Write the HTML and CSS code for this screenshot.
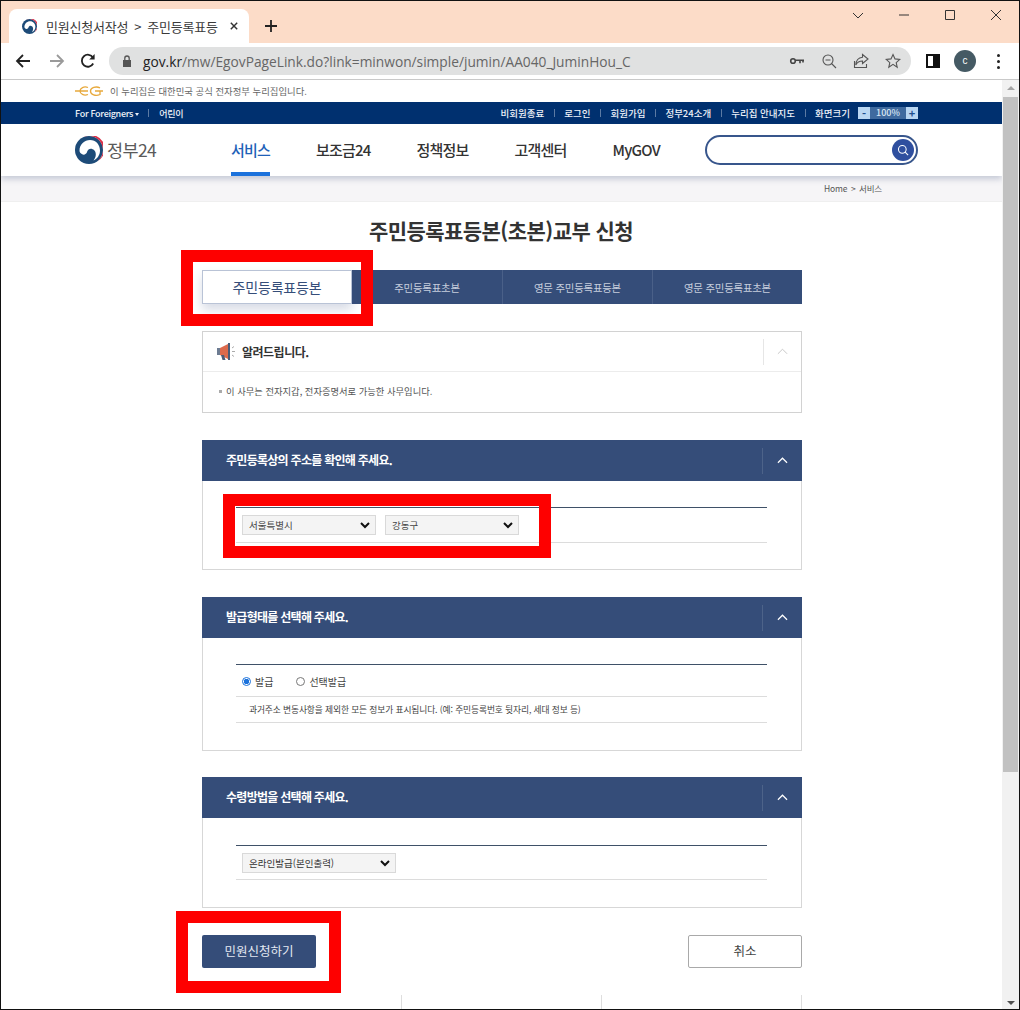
FILE: index.html
```html
<!DOCTYPE html>
<html lang="ko">
<head>
<meta charset="utf-8">
<title>민원신청서작성</title>
<link rel="stylesheet" href="styles.css">
</head>
<body>
<div class="window">
  <div class="tabstrip">
    <div class="tab">
      <svg class="favicon" viewBox="0 0 28 28"><use href="#taegeuk"/></svg>
      <span class="tab-title">민원신청서작성 &gt; 주민등록표등</span>
      <svg class="tab-close" viewBox="0 0 10 10"><path d="M1 1l8 8M9 1l-8 8"/></svg>
    </div>
    <svg class="newtab" viewBox="0 0 12 12"><path d="M6 0v12M0 6h12"/></svg>
    <div class="winctl">
      <svg viewBox="0 0 12 12"><path d="M1 4l5 5 5-5"/></svg>
      <svg viewBox="0 0 12 12"><path d="M1 6h10"/></svg>
      <svg viewBox="0 0 12 12"><path d="M1.500 1.500h9v9h-9z"/></svg>
      <svg viewBox="0 0 12 12"><path d="M1 1l10 10M11 1L1 11"/></svg>
    </div>
  </div>
  <div class="toolbar">
    <svg class="tb-icon" viewBox="0 0 16 16"><path class="ln" d="M15 8H2M8 2L2 8l6 6"/></svg>
    <svg class="tb-icon dim" viewBox="0 0 16 16"><path class="ln" d="M1 8h13M8 2l6 6-6 6"/></svg>
    <svg class="tb-icon reload" viewBox="0 0 16 16"><path class="ln" d="M13.200 10.500A6 6 0 1 1 13 4.600"/><path class="fl" d="M14.600 1v5.400H9.200z"/></svg>
    <div class="omnibox">
      <svg class="lock" viewBox="0 0 10 12"><path d="M1 5h8v7H1z"/><path class="shackle" d="M2.800 5V3.200a2.200 2.200 0 0 1 4.400 0V5"/></svg>
      <span class="url"><b>gov.kr</b>/mw/EgovPageLink.do?link=minwon/simple/jumin/AA040_JuminHou_C</span>
      <div class="omni-icons">
        <svg viewBox="0 0 16 16"><circle class="ln" cx="4" cy="8" r="2.300"/><path class="ln" d="M6.500 7.200H15M11 7.200v3M14 7.200v2.400"/></svg>
        <svg viewBox="0 0 16 16"><circle class="ln1" cx="7" cy="7" r="5"/><path class="ln1" d="M4.500 7h5M10.500 10.500L15 15"/></svg>
        <svg viewBox="0 0 16 16"><path class="ln1" d="M1.500 8v6.500h12V11M9.500 1.500L15 6l-5.500 4.500V8C6 8 4 9.500 2.800 12 3 7.500 5.500 4.600 9.500 4.200z"/></svg>
        <svg viewBox="0 0 16 16"><path class="ln1" d="M8 1.500l2 4.400 4.800.5-3.600 3.200 1 4.700L8 11.400l-4.200 2.900 1-4.700-3.600-3.200 4.800-.5z"/></svg>
      </div>
    </div>
    <div class="tb-right">
      <span class="sidepanel"></span>
      <span class="avatar">c</span>
      <span class="dots"><i></i><i></i><i></i></span>
    </div>
  </div>
  <div class="viewport">
    <div class="page">
      <div class="gov-strip">
        <svg class="eg" viewBox="0 0 28 10"><path d="M0 5H13M13 1.500C9 0 5 2 5 5s4 5 8 3.500M25 1.800C21 0 15.500 1.500 15.500 5s5 5.500 9.500 3.500V5H20M25 5h3"/></svg>
        <span>이 누리집은 대한민국 공식 전자정부 누리집입니다.</span>
      </div>
      <div class="utilbar">
        <div class="util-left">
          <span>For Foreigners <em class="caret"></em></span>
          <i class="sep"></i>
          <span>어린이</span>
        </div>
        <div class="util-right">
          <span>비회원종료</span><i class="sep"></i>
          <span>로그인</span><i class="sep"></i>
          <span>회원가입</span><i class="sep"></i>
          <span>정부24소개</span><i class="sep"></i>
          <span>누리집 안내지도</span><i class="sep"></i>
          <span>화면크기</span>
          <div class="zoomer"><b>-</b><span>100%</span><b>+</b></div>
        </div>
      </div>
      <header class="mainhead">
        <div class="brand">
          <svg class="logo" viewBox="0 0 28 28"><use href="#taegeuk"/></svg>
          <span>정부24</span>
        </div>
        <nav class="gnb">
          <a class="on">서비스</a>
          <a>보조금24</a>
          <a>정책정보</a>
          <a>고객센터</a>
          <a>MyGOV</a>
        </nav>
        <div class="search">
          <span class="search-btn"><svg viewBox="0 0 14 14"><circle cx="6.200" cy="6.200" r="4.500"/><path d="M9.500 9.500L13 13"/></svg></span>
        </div>
      </header>
      <div class="crumb">
        <span>Home &gt; 서비스</span>
      </div>
      <main class="content">
        <h1>주민등록표등본(초본)교부 신청</h1>
        <div class="tabs">
          <a class="active">주민등록표등본</a>
          <a>주민등록표초본</a>
          <a>영문 주민등록표등본</a>
          <a>영문 주민등록표초본</a>
        </div>
        <section class="notice">
          <div class="notice-head">
            <svg class="mega" viewBox="0 0 20 20"><path fill="#6d7c92" d="M1 6h3v7H1z"/><path fill="#dc6a4c" d="M4 6l8-4v15l-8-4z"/><path fill="#4a5d78" d="M12 1h2v17h-2zM5 13h3l1.500 5H6.500z"/><path fill="none" stroke="#aaa" d="M16 6l2-1.500M16 9.500h3M16 13l2 1.500"/></svg>
            <strong>알려드립니다.</strong>
            <span class="chev-cell"><svg class="chev" viewBox="0 0 12 7"><path d="M1 6l5-5 5 5"/></svg></span>
          </div>
          <p class="notice-body"><i class="sq"></i>이 사무는 전자지갑, 전자증명서로 가능한 사무입니다.</p>
        </section>

        <section class="panel p-addr">
          <div class="panel-head">
            <h2>주민등록상의 주소를 확인해 주세요.</h2>
            <span class="chev-cell"><svg class="chev" viewBox="0 0 12 7"><path d="M1 6l5-5 5 5"/></svg></span>
          </div>
          <div class="panel-body">
            <div class="row row-sel">
              <select class="sel"><option>서울특별시</option></select>
              <select class="sel"><option>강동구</option></select>
            </div>
          </div>
        </section>

        <section class="panel p-type">
          <div class="panel-head">
            <h2>발급형태를 선택해 주세요.</h2>
            <span class="chev-cell"><svg class="chev" viewBox="0 0 12 7"><path d="M1 6l5-5 5 5"/></svg></span>
          </div>
          <div class="panel-body">
            <div class="row row-radio">
              <label class="radio"><i class="dot on"></i>발급</label>
              <label class="radio"><i class="dot"></i>선택발급</label>
            </div>
            <div class="row row-note">과거주소 변동사항을 제외한 모든 정보가 표시됩니다. (예: 주민등록번호 뒷자리, 세대 정보 등)</div>
          </div>
        </section>

        <section class="panel p-recv">
          <div class="panel-head">
            <h2>수령방법을 선택해 주세요.</h2>
            <span class="chev-cell"><svg class="chev" viewBox="0 0 12 7"><path d="M1 6l5-5 5 5"/></svg></span>
          </div>
          <div class="panel-body">
            <div class="row row-sel2">
              <select class="sel wide"><option>온라인발급(본인출력)</option></select>
            </div>
          </div>
        </section>

        <div class="actions">
          <a class="btn primary">민원신청하기</a>
          <a class="btn ghost">취소</a>
        </div>
        <div class="foot-lines"><i></i><i></i><i></i></div>
      </main>
      <div class="mark m1"></div>
      <div class="mark m2"></div>
      <div class="mark m3"></div>
    </div>
    <div class="scrollbar">
      <i class="arrow up"></i>
      <div class="track"><div class="thumb"></div></div>
      <i class="arrow down"></i>
    </div>
  </div>
</div>
<svg class="defs" width="0" height="0">
  <symbol id="taegeuk" viewBox="0 0 28 28">
    <circle cx="14" cy="14" r="14" fill="#1d4b78"/>
    <path fill="#fff" d="M4.500 14.500C4.500 8.500 9.500 4 15 4c6 0 10 4.800 10 10.500 0 4.500-2.500 8-6.500 10 2.500-3 3.300-7.500.7-10.300-2.600-2.700-6.200-1.700-7 1.300-.7 2.800-3.200 3.800-5 2.800-1.700-1-2.700-2-2.700-3.800z"/>
    <path fill="#d9324a" d="M9 .9A14 14 0 0 1 23 24.700 11.500 11.500 0 0 0 9 .9z"/>
  </symbol>
</svg>
</body>
</html>
```
FILE: styles.css
```css
* { box-sizing: border-box; }
html, body { margin: 0; padding: 0; height: 100%; overflow: hidden; background: #fff; }
body { font-family: "Noto Sans CJK KR", "Liberation Sans", sans-serif; color: #333; }
a { text-decoration: none; color: inherit; }
h1, h2, p { margin: 0; }
i, em { font-style: normal; }
.defs { position: absolute; }

.window { width: 1020px; height: 1010px; border: 1px solid #111; display: flex; flex-direction: column; overflow: hidden; }

/* title strip */
.tabstrip { height: 42px; flex: none; background: #fcdcc8; display: flex; align-items: flex-end; padding-left: 8px; }
.tab { width: 240px; height: 34px; background: #fff; border-radius: 8px 8px 0 0; display: flex; align-items: center; padding: 0 11px 0 13px; }
.favicon { width: 15px; height: 15px; flex: none; }
.tab-title { margin-left: 9px; white-space: nowrap; font-size: 13px; color: #3a3a3a; letter-spacing: -.2px; word-spacing: 2.500px; }
.tab-close { width: 8px; height: 8px; margin-left: auto; flex: none; fill: none; stroke: #333; stroke-width: 1.800; }
.newtab { width: 12px; height: 12px; margin: 0 0 11px 16px; fill: none; stroke: #222; stroke-width: 1.800; flex: none; }
.winctl { margin-left: auto; align-self: flex-start; display: flex; gap: 34px; padding: 8px 17px 0 0; }
.winctl svg { width: 12px; height: 12px; fill: none; stroke: #333; stroke-width: 1; }

/* toolbar */
.toolbar { height: 37px; flex: none; background: #fff; border-bottom: 1px solid #c9c9c9; display: flex; align-items: center; padding-left: 14px; }
.tb-icon { width: 16px; height: 16px; flex: none; margin-right: 18px; }
.tb-icon.reload { margin-right: 13px; margin-left: -3px; }
.tb-icon .ln { fill: none; stroke: #222; stroke-width: 1.800; }
.tb-icon .fl { fill: #222; }
.tb-icon.dim .ln { stroke: #9a9a9a; }
.omnibox { width: 802px; height: 28px; background: #e0e1e1; border-radius: 14px; display: flex; align-items: center; padding-left: 13px; flex: none; }
.lock { width: 10px; height: 12px; flex: none; fill: #555; }
.lock .shackle { fill: none; stroke: #555; stroke-width: 1.300; }
.url { margin-left: 11px; font: 13.740px "Open Sans", "Liberation Sans", sans-serif; color: #666; white-space: nowrap; }
.url b { font-weight: 400; color: #222; }
.omni-icons { margin-left: auto; display: flex; gap: 16px; padding-right: 10px; }
.omni-icons svg { width: 16px; height: 16px; }
.omni-icons .ln { fill: none; stroke: #444; stroke-width: 1.600; }
.omni-icons .ln1 { fill: none; stroke: #555; stroke-width: 1.100; }
.tb-right { display: flex; align-items: center; margin-left: 15px; }
.sidepanel { width: 14px; height: 14px; border: 2px solid #111; border-right-width: 7px; }
.avatar { width: 22px; height: 22px; border-radius: 50%; background: #455a64; color: #fff; font: 10px/22px "Liberation Sans", sans-serif; text-align: center; margin-left: 14px; }
.dots { display: flex; flex-direction: column; gap: 3px; margin-left: 21px; }
.dots i { width: 3px; height: 3px; border-radius: 50%; background: #222; }

/* viewport */
.viewport { flex: 1; display: flex; min-height: 0; }
.page { width: 1001px; flex: none; position: relative; overflow: hidden; background: #fff; }
.scrollbar { width: 17px; flex: none; background: #f1f1f1; display: flex; flex-direction: column; align-items: center; padding-top: 6px; padding-bottom: 4px; }
.arrow { width: 0; height: 0; border-left: 4px solid transparent; border-right: 4px solid transparent; flex: none; }
.arrow.up { border-bottom: 4px solid #a3a3a3; }
.arrow.down { border-top: 4px solid #505050; }
.track { flex: 1; width: 100%; padding: 7px 1px 0; }
.thumb { height: 675px; background: #c1c1c1; }

/* government strip */
.gov-strip { height: 22px; display: flex; align-items: center; padding-left: 74px; font-size: 9.400px; color: #666; }
.eg { width: 28px; height: 10px; fill: none; stroke: #e8a93c; stroke-width: 1.300; margin-right: 7px; flex: none; }

.utilbar { height: 22px; background: #00306f; color: #eef2f8; font-size: 9.500px; font-weight: 500; display: flex; justify-content: space-between; align-items: center; padding: 0 84px 0 74px; white-space: nowrap; }
.util-left, .util-right { display: flex; align-items: center; }
.util-left { font-size: 9px; letter-spacing: -.3px; }
.sep { width: 1px; height: 8px; background: #5c7aa3; margin: 0 9.500px; flex: none; }
.util-left .sep { margin: 0 10px 0 9px; }
.caret { display: inline-block; border-left: 2.500px solid transparent; border-right: 2.500px solid transparent; border-top: 3px solid #e8eef6; vertical-align: 1px; }
.zoomer { display: flex; height: 12px; margin-left: 8px; line-height: 12px; text-align: center; font-size: 9px; }
.zoomer b { width: 12px; background: #b9d6f2; color: #1f4f8f; font-size: 11px; }
.zoomer span { width: 36px; background: #3f6a9f; color: #d8e6f4; }

/* main header */
.mainhead { height: 52px; padding: 0 84px 0 74px; background: #fff; display: flex; align-items: center; box-shadow: 0 3px 6px rgba(70, 85, 130, .28); position: relative; }
.brand { display: flex; align-items: center; width: 156px; flex: none; color: #5a5a5a; font-size: 17.500px; letter-spacing: -.6px; line-height: 50px; }
.logo { width: 28px; height: 28px; margin-right: 4px; flex: none; }
.gnb { display: flex; gap: 46px; height: 100%; font-size: 15px; font-weight: 500; color: #333; letter-spacing: -.8px; flex: none; }
.gnb a { line-height: 52px; height: 100%; white-space: nowrap; }
.gnb a.on { color: #1f62b8; border-bottom: 4px solid #1b72dc; }
.search { margin-left: auto; width: 213px; height: 30px; border: 2px solid #38568c; border-radius: 15px; display: flex; justify-content: flex-end; align-items: center; padding-right: 2px; }
.search-btn { width: 22px; height: 22px; border-radius: 50%; background: #2f4f9f; display: flex; align-items: center; justify-content: center; }
.search-btn svg { width: 12px; height: 12px; fill: none; stroke: #fff; stroke-width: 1.200; }

.crumb { height: 26px; background: #f6f5f7; border-bottom: 1px solid #efefef; display: flex; justify-content: flex-end; align-items: center; padding: 0 120px 2px 0; font-size: 8.500px; color: #555; word-spacing: 1.300px; letter-spacing: -.15px; }

/* content */
.content { width: 600px; margin: 0 0 0 201px; }
h1 { font-size: 21px; font-weight: 700; color: #333; text-align: center; margin: 15px 0 0; padding-right: 2px; line-height: 26px; height: 51px; letter-spacing: -.55px; white-space: nowrap; }
.tabs { display: flex; height: 34px; background: #354d79; margin-top: 2px; }
.tabs a { width: 150px; font-size: 10.400px; color: #c6cedd; display: flex; align-items: center; justify-content: center; border-left: 1px solid #4a6088; white-space: nowrap; letter-spacing: -.2px; }
.tabs a:first-child { border-left: 0; }
.tabs a.active { background: #fff; color: #354d79; font-size: 14px; letter-spacing: -.2px; border: 1px solid #b9c3d6; box-shadow: 0 6px 10px rgba(60, 80, 130, .2); position: relative; }
.tabs a.active + a { border-left: 0; }

.notice { margin-top: 27px; height: 82px; border: 1px solid #d2d2d2; }
.notice-head { height: 40px; border-bottom: 1px solid #ececec; display: flex; align-items: center; padding-left: 13px; }
.mega { width: 20px; height: 20px; flex: none; margin-right: 6px; }
.notice-head strong { font-size: 12px; font-weight: 700; letter-spacing: -.5px; color: #333; padding-bottom: 1px; }
.chev-cell { margin-left: auto; width: 38px; height: 26px; border-left: 1px solid #e6e6e6; display: flex; align-items: center; justify-content: center; flex: none; }
.chev { width: 11px; height: 7px; fill: none; stroke: #c4c4c4; stroke-width: 1; }
.notice-body { padding: 13px 0 0 16px; font-size: 9.300px; color: #555; display: flex; align-items: center; line-height: 13px; }
.sq { width: 3px; height: 3px; background: #aaa; margin-right: 4px; flex: none; }

.panel { margin-top: 27px; border: 1px solid #d7d7d7; border-top: 0; }
.panel-head { height: 41px; margin: 0 -1px; background: #354d79; display: flex; align-items: center; padding-left: 24px; }
.panel-head h2 { font-size: 12px; font-weight: 700; color: #fff; letter-spacing: -.72px; white-space: nowrap; padding-bottom: 3px; }
.panel-head .chev-cell { width: 40px; border-left-color: #4d6389; }
.panel-head .chev { stroke: #fff; stroke-width: 1.300; }
.panel-body { padding: 26px 34px 0 33px; }
.row { border-bottom: 1px solid #dcdcdc; font-size: 10px; color: #444; }
.row-sel { height: 36px; border-top: 1px solid #3f5168; display: flex; gap: 9px; padding: 7px 0 0 6px; }
.row-sel2 { height: 35px; border-top: 1px solid #3f5168; padding: 7px 0 0 6px; }
.p-addr { height: 130px; }
.p-type { height: 154px; }
.p-recv { height: 131px; margin-top: 26px; }
.p-recv .panel-body { padding-top: 27px; }
.row-radio { height: 33px; border-top: 1px solid #3f5168; display: flex; align-items: center; padding: 1px 0 0 6px; gap: 23px; }
.row-note { height: 26px; line-height: 25px; padding-left: 13px; font-size: 8.750px; letter-spacing: -.12px; white-space: nowrap; }
.radio { display: flex; align-items: center; gap: 4px; }
.dot { width: 9px; height: 9px; border: 1px solid #777; border-radius: 50%; background: #fff; flex: none; }
.dot.on { border-color: #1b72dc; background: radial-gradient(circle, #1b72dc 0 2.500px, #fff 3px); }
.sel { appearance: none; width: 134px; height: 20px; font: 9.500px "Noto Sans CJK KR", sans-serif; color: #444; background: #f4f4f4 url("data:image/svg+xml,%3Csvg xmlns='http://www.w3.org/2000/svg' width='10' height='7' viewBox='0 0 10 7'%3E%3Cpath d='M1 1l4 4 4-4' fill='none' stroke='%23111' stroke-width='2'/%3E%3C/svg%3E") no-repeat right 5px center; border: 1px solid #d9d9d9; border-radius: 0; padding: 0 4px 0 6px; }
.sel.wide { width: 154px; color: #333; }

.actions { display: flex; justify-content: space-between; margin-top: 27px; }
.btn { width: 114px; height: 33px; border-radius: 2px; display: flex; align-items: center; justify-content: center; font-size: 12.500px; line-height: 30px; padding-bottom: 2px; }
.btn.primary { background: #354d79; color: #e4e9f2; }
.btn.ghost { background: #fff; border: 1px solid #a9a9a9; color: #444; }
.foot-lines { display: flex; justify-content: flex-start; margin-top: 27px; height: 14px; padding-left: 199px; gap: 199px; }
.foot-lines i { width: 1px; height: 14px; background: #dedede; flex: none; }

/* red annotation boxes lie over the page */
.mark { position: absolute; border: 12px solid #fe0000; pointer-events: none; }
.m1 { left: 180px; top: 170px; width: 192px; height: 76px; }
.m2 { left: 222px; top: 414px; width: 328px; height: 64px; }
.m3 { left: 175px; top: 831px; width: 165px; height: 82px; }
```
